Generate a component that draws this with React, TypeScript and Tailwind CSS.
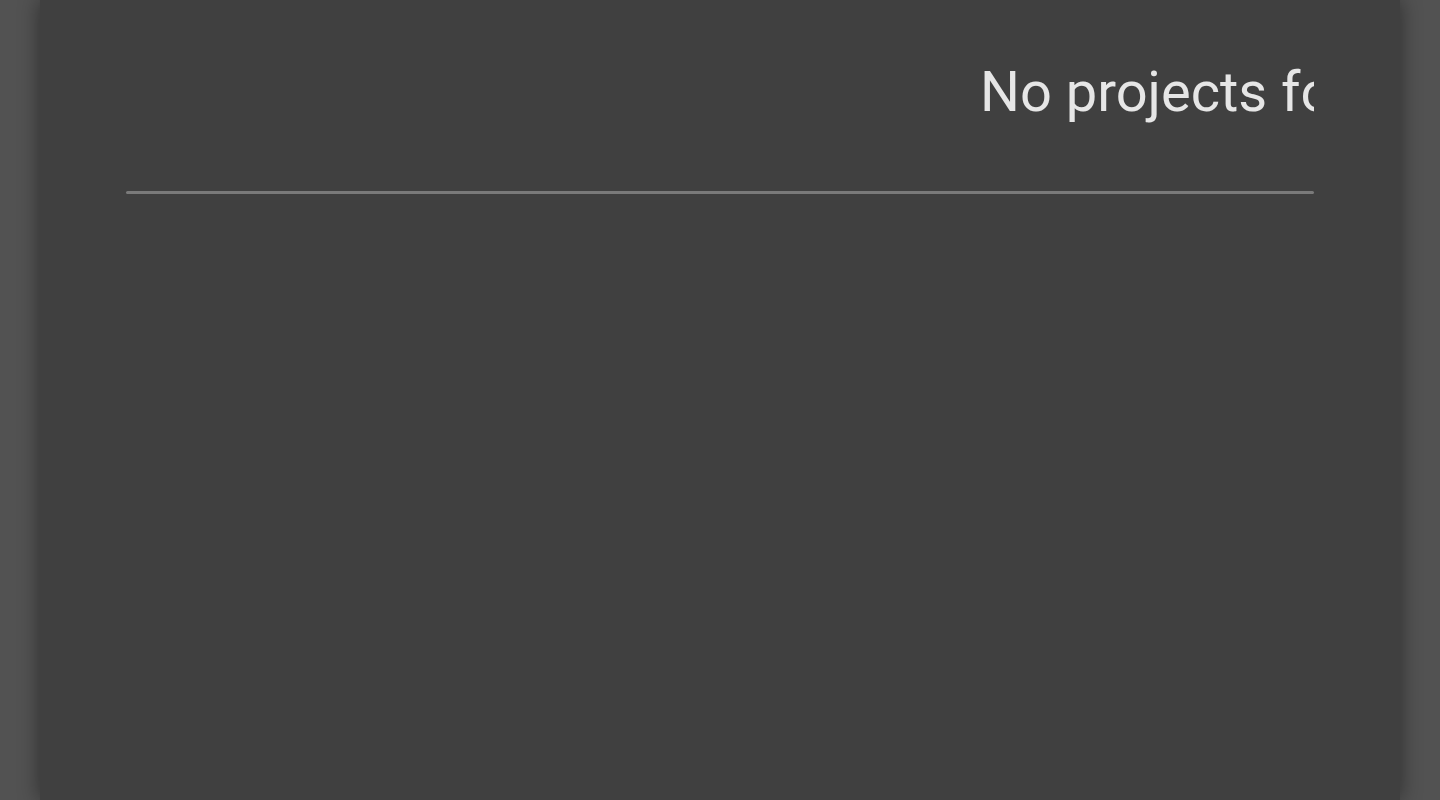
export default function App() {
  return (
    <main className="h-[800px] w-full bg-[#525252] px-10 overflow-hidden" style={{ fontFamily: "Roboto, 'Noto Sans', sans-serif" }}>
      <section className="h-full bg-[#404040] px-[86px] shadow-[0_0_20px_rgba(0,0,0,0.45)]">
        <div className="overflow-hidden">
          <h2 className="pl-[854px] pt-[58px] pb-[65px] text-[56px] leading-[68px] text-[#e6e6e6] whitespace-nowrap">
            No projects found
          </h2>
        </div>
        <hr className="h-[3px] border-0 rounded-full bg-[#7a7a7a]" />
      </section>
    </main>
  );
}
